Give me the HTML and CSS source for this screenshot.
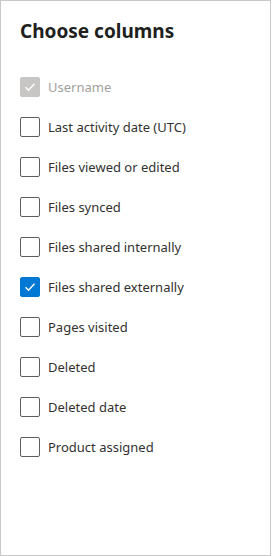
FILE: index.html
```html
<!DOCTYPE html>
<html lang="en">
<head>
<meta charset="UTF-8">
<meta name="viewport" content="width=device-width, initial-scale=1.0">
<title>Choose columns</title>
<link rel="stylesheet" href="styles.css">
</head>
<body>
<div class="panel">
  <h1>Choose columns</h1>
  <ul class="cols">
    <li class="disabled"><span class="box checked"><svg viewBox="0 0 18 18"><path d="M4.5 9.2l3 3 6-6.4" /></svg></span>Username</li>
    <li><span class="box"></span>Last activity date (UTC)</li>
    <li><span class="box"></span>Files viewed or edited</li>
    <li><span class="box"></span>Files synced</li>
    <li><span class="box"></span>Files shared internally</li>
    <li><span class="box checked"><svg viewBox="0 0 18 18"><path d="M4.5 9.2l3 3 6-6.4" /></svg></span>Files shared externally</li>
    <li><span class="box"></span>Pages visited</li>
    <li><span class="box"></span>Deleted</li>
    <li><span class="box"></span>Deleted date</li>
    <li><span class="box"></span>Product assigned</li>
  </ul>
</div>
</body>
</html>
```

FILE: styles.css
```css
body { margin: 0; background: #fff; font-family: "Noto Sans", "Open Sans", sans-serif; color: #323130; }
.panel { width: 271px; height: 556px; box-sizing: border-box; border: 1px solid #c8c8c8; padding: 0 19px; }
h1 { margin: 0; padding-top: 17px; height: 66px; box-sizing: border-box; font-size: 19px; font-weight: 700; line-height: 26px; color: #201f1e; }
.cols { list-style: none; margin: 0; padding: 0; }
.cols li { display: flex; align-items: center; gap: 8px; height: 40px; font-size: 13px; }
.box { flex: none; width: 20px; height: 20px; box-sizing: border-box; border: 1px solid #605e5c; border-radius: 2px; display: flex; align-items: center; justify-content: center; }
.box svg { flex: none; width: 18px; height: 18px; fill: none; stroke: #fff; stroke-width: 1.4; }
.box.checked { background: #0078d4; border-color: #0078d4; }
.disabled { color: #a19f9d; }
.disabled .box.checked { background: #c8c6c4; border-color: #c8c6c4; }
```
